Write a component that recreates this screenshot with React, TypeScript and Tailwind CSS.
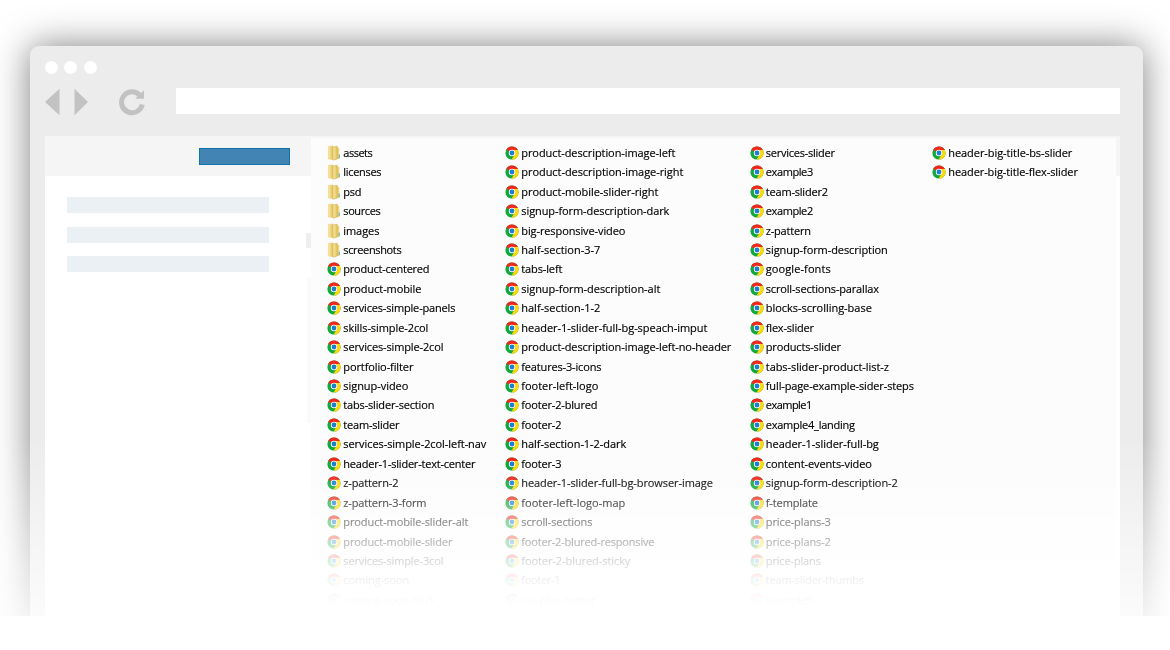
import { useLayoutEffect, useRef } from "react";

const columns = [
  {
    box: "w-[178px]",
    folders: 6,
    names: [
      ["assets", 29], ["licenses", 38], ["psd", 18], ["sources", 37], ["images", 36], ["screenshots", 58],
      ["product-centered", 86], ["product-mobile", 78], ["services-simple-panels", 112], ["skills-simple-2col", 85],
      ["services-simple-2col", 100], ["portfolio-filter", 70], ["signup-video", 65], ["tabs-slider-section", 91],
      ["team-slider", 56], ["services-simple-2col-left-nav", 143], ["header-1-slider-text-center", 132], ["z-pattern-2", 55],
      ["z-pattern-3-form", 83], ["product-mobile-slider-alt", 125], ["product-mobile-slider", 109],
      ["services-simple-3col", 100], ["coming-soon", 66], ["coming-soon-dark", 92],
    ],
  },
  {
    box: "w-[244.5px]",
    folders: 0,
    names: [
      ["product-description-image-left", 154], ["product-description-image-right", 162], ["product-mobile-slider-right", 137],
      ["signup-form-description-dark", 148], ["big-responsive-video", 104], ["half-section-3-7", 79], ["tabs-left", 41],
      ["signup-form-description-alt", 139], ["half-section-1-2", 79], ["header-1-slider-full-bg-speach-imput", 186],
      ["product-description-image-left-no-header", 210], ["features-3-icons", 80], ["footer-left-logo", 77],
      ["footer-2-blured", 76], ["footer-2", 40], ["half-section-1-2-dark", 105], ["footer-3", 40],
      ["header-1-slider-full-bg-browser-image", 191.5], ["footer-left-logo-map", 104], ["scroll-sections", 71],
      ["footer-2-blured-responsive", 133], ["footer-2-blured-sticky", 109], ["footer-1", 39], ["cta-plus-footer", 74],
    ],
  },
  {
    box: "w-[182.5px]",
    folders: 0,
    names: [
      ["services-slider", 69], ["example3", 47], ["team-slider2", 62], ["example2", 47], ["z-pattern", 45],
      ["signup-form-description", 122], ["google-fonts", 65], ["scroll-sections-parallax", 113], ["blocks-scrolling-base", 106],
      ["flex-slider", 48], ["products-slider", 75], ["tabs-slider-product-list-z", 123], ["full-page-example-sider-steps", 148],
      ["example1", 46], ["example4_landing", 89], ["header-1-slider-full-bg", 113], ["content-events-video", 106],
      ["signup-form-description-2", 132], ["f-template", 52], ["price-plans-3", 65], ["price-plans-2", 65],
      ["price-plans", 55], ["team-slider-thumbs", 98], ["example5", 46],
    ],
  },
  {
    box: "w-[170px]",
    folders: 0,
    names: [["header-big-title-bs-slider", 124], ["header-big-title-flex-slider", 129.5]],
  },
] as { box: string; folders: number; names: [string, number][] }[];

function ChromeIcon() {
  return (
    <svg viewBox="0 0 14 14" className="h-[14px] w-[14px] shrink-0">
      <circle cx="7" cy="7" r="6.6" fill="#12a83c" />
      <path d="M7 7L1.3 3.7A6.6 6.6 0 0 1 12.9 4.1H7Z" fill="#f0281e" />
      <path d="M7 7L7 4.1H12.9A6.6 6.6 0 0 1 6.6 13.6L9.7 8.4Z" fill="#ffd80a" />
      <circle cx="7" cy="7" r="3.2" fill="#fff" />
      <circle cx="7" cy="7" r="2.4" fill="#1a7fd0" />
    </svg>
  );
}

function FolderIcon() {
  return (
    <svg viewBox="0 0 14 16" className="h-[16px] w-[14px] shrink-0">
      <defs>
        <linearGradient id="folder" x1="0" x2="1">
          <stop offset="0" stopColor="#faeba8" />
          <stop offset="1" stopColor="#e2c05a" />
        </linearGradient>
      </defs>
      <path d="M1.4 1.4L6 .9V14.5L1.4 14Z" fill="url(#folder)" stroke="#e2c974" strokeWidth=".5" />
      <path d="M9 2.5L12.3 3V14H9Z" fill="#efd679" />
      <path d="M6 2L10.3 1.2V14L6 15.2Z" fill="url(#folder)" stroke="#cda944" strokeWidth=".5" />
      <path d="M12.2 9.5V13.2" stroke="#49a9b5" strokeWidth="1" />
    </svg>
  );
}

function FileName({ text, width }: { text: string; width: number }) {
  const ref = useRef<HTMLSpanElement>(null);

  useLayoutEffect(() => {
    const el = ref.current;
    if (!el) return;
    const fit = () => {
      el.style.letterSpacing = "0px";
      const natural = el.getBoundingClientRect().width;
      el.style.letterSpacing = `${(width - natural) / text.length}px`;
    };
    fit();
    document.fonts?.ready.then(fit);
  }, [text, width]);

  return (
    <span
      ref={ref}
      className="whitespace-nowrap font-['Open_Sans',sans-serif] text-[11px] leading-[18px] text-black [-webkit-text-stroke:0.15px_black]"
    >
      {text}
    </span>
  );
}

export default function App() {
  return (
    <div className="h-[650px] w-[1170px] overflow-hidden bg-white">
      <div className="relative h-[616px] overflow-hidden pl-[30px] pt-[46px]">
        <div className="h-[640px] w-[1113px] rounded-t-[9px] bg-[#ececec] pl-[15px] shadow-[0_0_36px_rgba(0,0,0,0.5)]">
          <div className="flex h-[42px] items-start pt-[15px]">
            <div className="h-[13px] w-[13px] rounded-full bg-white" />
            <div className="ml-[6px] h-[13px] w-[13px] rounded-full bg-white" />
            <div className="ml-[7px] h-[13px] w-[13px] rounded-full bg-white" />
          </div>
          <div className="flex h-[48px] items-start">
            <svg viewBox="0 0 101 28" className="mr-[30px] h-[28px] w-[101px] shrink-0">
              <path d="M0 14L14.5 .8V27.2Z M29.5 .8V27.2L43 14Z" fill="#c2c2c2" />
              <path d="M94.8 7.2A10.5 10.5 0 1 0 97.3 16.5" fill="none" stroke="#c2c2c2" strokeWidth="5" />
              <path d="M99 2.2V10.8H90.2Z" fill="#c2c2c2" />
            </svg>
            <div className="h-[26px] w-[944px] bg-white" />
          </div>
          <div className="flex h-[550px] w-[1075px] bg-[linear-gradient(#f5f5f5_40px,#fff_40px)]">
            <div className="flex w-[266px] flex-col">
              <div className="ml-[154px] mt-[11.5px] h-[17.5px] w-[90.5px] border border-[#1173ab] bg-[#4284b3]" />
              <div className="ml-[22px] mt-[32px] flex w-[202px] flex-col gap-[14px]">
                <div className="h-[16px] bg-[#eaf0f4]" />
                <div className="h-[16px] bg-[#eaf0f4]" />
                <div className="-mt-px h-[16px] bg-[#eaf0f4]" />
              </div>
            </div>
            <div className="relative z-10 mt-[1.5px] flex h-[548px] w-[805px] bg-[#fcfcfc] pl-[16px] pt-[5.55px] [mask-image:linear-gradient(black_332px,rgba(0,0,0,0.88)_346px,rgba(0,0,0,0.68)_365px,rgba(0,0,0,0.46)_384px,rgba(0,0,0,0.3)_403px,rgba(0,0,0,0.16)_423px,rgba(0,0,0,0.06)_442px,rgba(0,0,0,0.02)_462px,transparent_475px)]">
              {columns.map((column, c) => (
                <div key={c} className={`flex shrink-0 flex-col ${column.box}`}>
                  {column.names.map(([text, width], r) => (
                    <div key={text} className="flex h-[19.44px] shrink-0 items-center gap-[2.3px]">
                      {r < column.folders ? <FolderIcon /> : <ChromeIcon />}
                      <FileName text={text} width={width} />
                    </div>
                  ))}
                </div>
              ))}
            </div>
          </div>
        </div>
        <div className="absolute left-[306px] top-[233px] h-[15px] w-[5px] bg-[#eeeeee]" />
        <div className="absolute left-[307px] top-[277px] h-[146px] w-[4px] bg-[#fafafa]" />
        <div className="absolute bottom-0 left-0 h-[180px] w-full bg-linear-to-b from-white/0 to-white/80" />
      </div>
    </div>
  );
}
